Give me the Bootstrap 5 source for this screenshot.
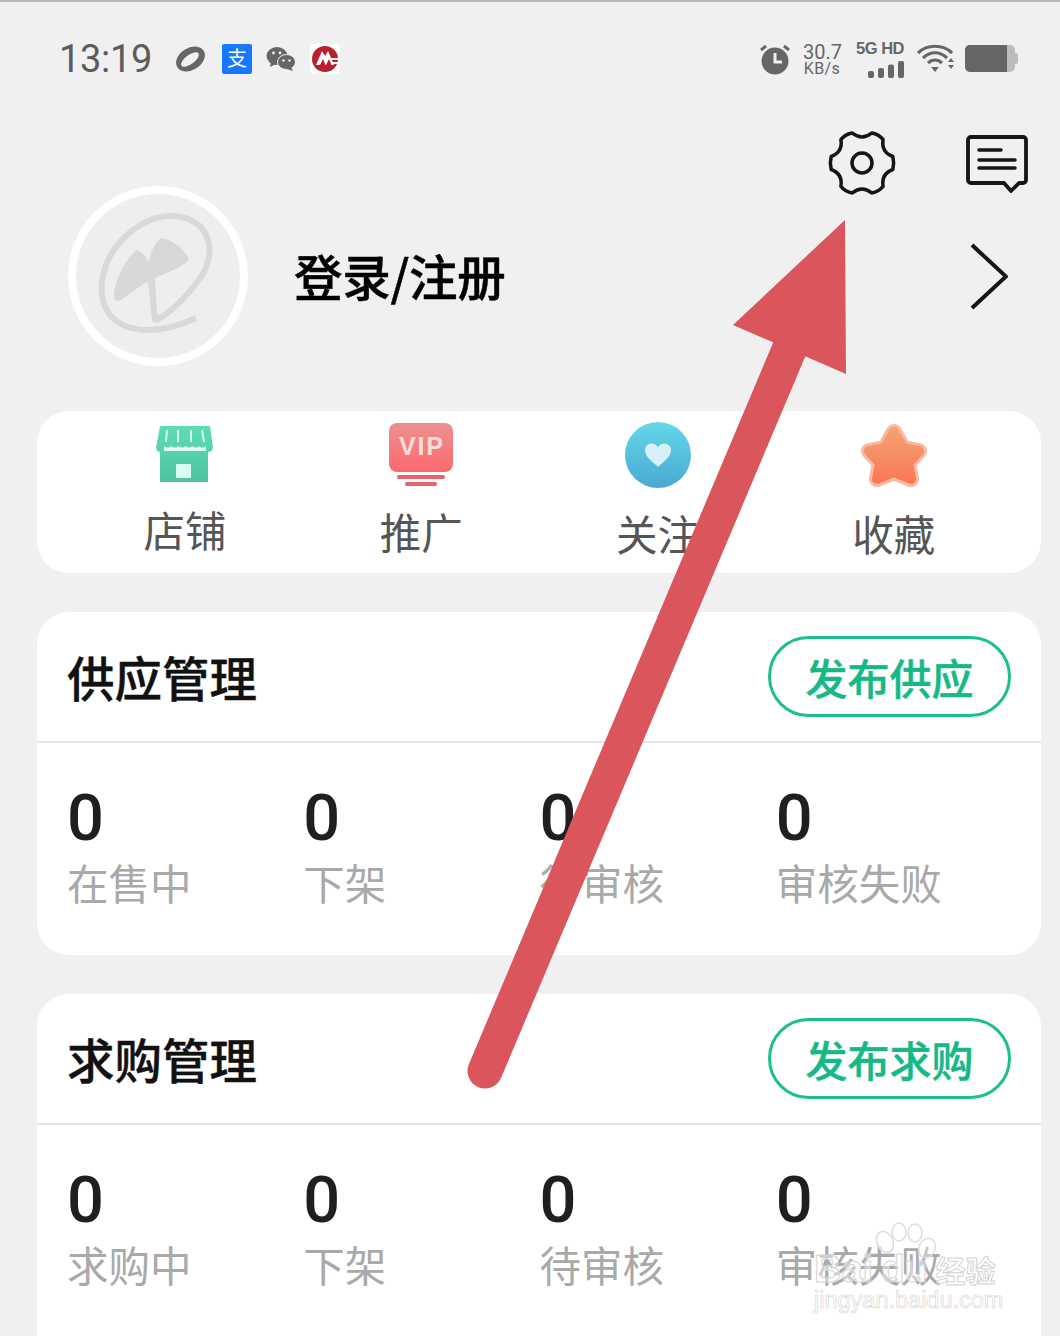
<!DOCTYPE html>
<html lang="zh-CN">
<head>
<meta charset="utf-8">
<title>我的</title>
<link href="https://cdn.jsdelivr.net/npm/bootstrap@5.3.0/dist/css/bootstrap.min.css" rel="stylesheet">
<style>
html,body{margin:0;padding:0;background:#f0f0f0}
.shot{position:relative;width:1060px;height:1336px;overflow:hidden;background:#f0f0f0;border-top:2px solid #b8b8b8;font-family:"Noto Sans CJK SC","Liberation Sans",sans-serif}
.sbar{height:36px;margin-top:39px;padding:0 41px 0 59px}
.clock{font:400 38px/36px Roboto,sans-serif;color:#5c5c5c;margin-right:23px;letter-spacing:-.3px}
.gap-a{margin-right:16px}.gap-b{margin-right:14px}.gap-c{margin-right:6px}.gap-d{margin-right:10px}.gap-e{margin-right:12px}
.speed{font-family:Roboto,sans-serif;color:#666;text-align:center;line-height:1;width:38px;margin-right:13px}
.speed b{display:block;font-weight:400;font-size:20px}
.speed i{display:block;font-style:normal;font-size:16px;margin-top:-1px;letter-spacing:.4px}
.net{width:50px;margin-right:13px;font:700 16.500px/1 "Liberation Sans",sans-serif;color:#666;white-space:nowrap;letter-spacing:-.5px}
.tools{height:60px;margin-top:56px;padding-right:32px;gap:71px}
.who{height:180px;margin-top:-7px;padding:0 52px 0 68px}
.who-name{font-size:48.500px;font-weight:500;color:#000;line-height:1;margin-left:46px;margin-top:-1px;letter-spacing:-.3px;-webkit-text-stroke:.5px #000}
.panel{margin:0 19px 0 37px;border:0;border-radius:32px;background:#fff}
.tiles{height:162px;margin-top:45px;padding:0 29px 0 30px}
.tile{height:162px;padding-top:13px;text-align:center;color:#555;font-size:41.500px;line-height:1}
.tile svg{display:block;margin:0 auto}
.lab1{margin-top:25px}.lab2{margin-top:24px}.lab3{margin-top:25px}.lab4{margin-top:21px}
.mgmt{height:343px;margin-top:39px}
.mgmt2{height:380px}
.mgmt .card-header{height:131px;padding:0 30px 0 30px;background:none;border-bottom:2px solid #e6e6e6;border-radius:32px 32px 0 0}
.mgmt-title{font-size:47.500px;font-weight:500;line-height:1;color:#111;-webkit-text-stroke:.4px #111}
.pub{width:243px;height:81px;border:3px solid #1dbf90;border-radius:41px;padding:0;background:#fff;color:#16b887;font-size:42px;font-weight:500;line-height:1;-webkit-text-stroke:.4px #16b887}
.mgmt .card-body{padding:42px 29px 0 30px}
.num{font:500 65px/66px Roboto,sans-serif;color:#1f1f1f}
.tag{font-size:41.500px;line-height:1;color:#a9a9a9;margin-top:11px;white-space:nowrap}
.over{position:absolute;left:0;top:-2px;pointer-events:none}
.wm{position:absolute;left:814px;top:1248px;width:195px;color:rgba(255,255,255,.45);-webkit-text-stroke:1px #d4d4d4;white-space:nowrap;line-height:1}
.wm1{font:700 38px/38px "Liberation Sans","Noto Sans CJK SC",sans-serif}
.wm1 em{font-style:normal;font-size:30px;margin-left:8px}
.wm2{font:400 23.500px/23px "Liberation Sans",sans-serif;margin-top:-2px;color:#fff;-webkit-text-stroke:.7px #d8d8d8}
</style>
</head>
<body>
<div class="shot">

  <div class="sbar d-flex align-items-center">
    <span class="clock">13:19</span>
    <svg width="31" height="30" viewBox="0 0 31 30" class="gap-a"><ellipse cx="15.500" cy="15" rx="15.500" ry="11" transform="rotate(-32 15.500 15)" fill="#666"/><ellipse cx="15" cy="15.500" rx="10.500" ry="4.500" transform="rotate(-36 15 15.500)" fill="#f0f0f0"/></svg>
    <svg width="30" height="30" viewBox="0 0 30 30" class="gap-b"><rect width="30" height="30" rx="2" fill="#1677ff"/><text x="15" y="22" text-anchor="middle" font-size="20" font-family="Noto Sans CJK SC" fill="#fff">支</text></svg>
    <svg width="30" height="26" viewBox="0 0 30 26" class="gap-c"><ellipse cx="11" cy="10" rx="10.500" ry="9" fill="#666"/><path d="M5 16l-1 5 6-3Z" fill="#666"/><ellipse cx="20.500" cy="16" rx="9" ry="7.500" fill="#666" stroke="#f0f0f0" stroke-width="1"/><path d="M25 21l2 4-6-2Z" fill="#666"/><circle cx="7.500" cy="7" r="1.400" fill="#f0f0f0"/><circle cx="14" cy="7" r="1.400" fill="#f0f0f0"/><circle cx="17.500" cy="14.500" r="1.200" fill="#f0f0f0"/><circle cx="23.500" cy="14.500" r="1.200" fill="#f0f0f0"/></svg>
    <svg width="30" height="30" viewBox="0 0 30 30" class="ms-2"><rect width="30" height="30" rx="4" fill="#fff"/><circle cx="15" cy="15" r="13" fill="#b91f2f"/><path d="M6 21 12 7l3 5 3-5 6 14Z" fill="#fff"/><path d="M10 21l3-6 2.500 6ZM16 21l3-6 2.500 6Z" fill="#b91f2f"/><path d="M21 15h8M23 19h6" stroke="#fff" stroke-width="2"/></svg>
    <span class="ms-auto"></span>
    <svg width="32" height="32" viewBox="0 0 32 32" class="gap-e flex-shrink-0"><circle cx="16" cy="18" r="13.500" fill="#666"/><path d="M16 10v9h7" stroke="#f0f0f0" stroke-width="3" fill="none"/><path d="M2 7l5-4M30 7l-5-4" stroke="#666" stroke-width="3"/></svg>
    <span class="speed"><b>30.7</b><i>KB/s</i></span>
    <span class="net d-flex flex-column align-items-end">
      <span>5G HD</span>
      <svg width="36" height="17" viewBox="0 0 36 17" class="mt-1"><rect x="0" y="10" width="6" height="7" rx="2" fill="#666"/><rect x="10" y="7" width="6" height="10" rx="2" fill="#666"/><rect x="20" y="3.500" width="6" height="13.500" rx="2" fill="#666"/><rect x="30" y="0" width="6" height="17" rx="2" fill="#666"/></svg>
    </span>
    <svg width="38" height="30" viewBox="0 0 38 30" class="flex-shrink-0 gap-d"><path d="M1 9C10 0 26 0 35 9M6 14C13 7 23 7 30 14M11 19c4-4 10-4 14 0" fill="none" stroke="#666" stroke-width="3.200"/><path d="M14 23l4 5 4-5Z" fill="#666"/><path d="M31 18l3-4 3 4ZM31 21l3 4 3-4Z" fill="#666"/></svg>
    <svg width="54" height="28" viewBox="0 0 54 28" class="flex-shrink-0"><rect x="0" y="0" width="50" height="27" rx="5" fill="#bcbcbc"/><rect x="49" y="8" width="4" height="11" rx="2" fill="#bcbcbc"/><path d="M5 0h37v27H5a5 5 0 0 1-5-5V5a5 5 0 0 1 5-5Z" fill="#666"/></svg>
  </div>

  <div class="tools d-flex justify-content-end align-items-start">
    <svg width="66" height="60" viewBox="0 0 66 60" overflow="visible"><path d="M23.300 0Q33 8 42.700 0Q49.500 1 54.100 6.600Q52 19 63.800 23.500Q65.500 30 63.800 36.500Q52 41 54.100 53.400Q49.500 59 42.700 60Q33 52 23.300 60Q16.500 59 11.900 53.400Q14 41 2.200 36.500Q.5 30 2.200 23.500Q14 19 11.900 6.600Q16.500 1 23.300 0Z" fill="none" stroke="#151515" stroke-width="3.500" stroke-linejoin="round"/><circle cx="33" cy="30" r="10" fill="none" stroke="#151515" stroke-width="3.500"/></svg>
    <svg width="62" height="60" viewBox="0 0 62 60"><path d="M5 4h52a3 3 0 0 1 3 3v40a3 3 0 0 1-3 3H53l-8 8-7-8H5a3 3 0 0 1-3-3V7a3 3 0 0 1 3-3Z" fill="none" stroke="#151515" stroke-width="3.800" stroke-linejoin="round"/><path d="M13 17h22M13 27h36M13 35h36" stroke="#151515" stroke-width="3.500" stroke-linecap="round"/></svg>
  </div>

  <div class="who d-flex align-items-center">
    <svg width="180" height="180" viewBox="0 0 180 180" class="flex-shrink-0"><circle cx="90" cy="90" r="86" fill="#eeeeee" stroke="#ffffff" stroke-width="8"/><path d="M128 132C90 150 45 150 35 115C25 70 70 28 105 30C145 32 150 70 130 95C115 115 100 128 87 135" fill="none" stroke="#d9d9d9" stroke-width="6"/><path d="M69 64C74 66 78 70 80 76C84 64 88 54 94 52C105 54 118 64 121 74C112 82 96 88 87 92C88 105 88 120 90 130L85 137C82 125 82 110 80 96C70 100 58 112 50 115C44 115 46 105 48 98C52 85 60 70 69 64Z" fill="#d8d8d8"/></svg>
    <span class="who-name">登录/注册</span>
    <svg width="38" height="67" viewBox="0 0 38 67" class="ms-auto"><path d="M2 2l34 31.500L2 65" fill="none" stroke="#151515" stroke-width="4"/></svg>
  </div>

  <div class="panel tiles card">
    <div class="row g-0">
      <div class="col-3 tile">
        <svg width="60" height="60" viewBox="0 0 60 60"><defs><linearGradient id="g1" x1="0" y1="0" x2="0" y2="1"><stop offset="0" stop-color="#5fdcb4"/><stop offset="1" stop-color="#4cc4a2"/></linearGradient></defs><path d="M5 2h50l3 22c-1 3-3 4-5 4v30H5V28c-2 0-3-1-4-4Z" fill="url(#g1)"/><path d="M12 6l-1 12M23 6v12M36 6v12M47 6l2 12" stroke="#d8f7ec" stroke-width="2"/><path d="M9 22q5 3 7 0 5 3 7 0 5 3 7 0 5 3 7 0 5 3 7 0 3 3 7 0v5H9Z" fill="#e1faf2"/><rect x="21" y="40" width="15" height="14" fill="#d9fbf0"/></svg>
        <div class="lab1">店铺</div>
      </div>
      <div class="col-3 tile">
        <svg width="64" height="64" viewBox="0 0 64 64" style="margin-top:-1px"><defs><linearGradient id="g2" x1="0" y1="0" x2="0" y2="1"><stop offset="0" stop-color="#ec9190"/><stop offset="1" stop-color="#fd686e"/></linearGradient></defs><rect x="0" y="0" width="64" height="49" rx="8" fill="url(#g2)"/><text x="32" y="32" text-anchor="middle" font-size="25" font-weight="700" font-family="Liberation Sans" fill="#fbdcda" textLength="44">VIP</text><rect x="8" y="52" width="48" height="4" rx="2" fill="#e96169"/><rect x="16" y="59" width="32" height="4" rx="2" fill="#e96169"/></svg>
        <div class="lab2">推广</div>
      </div>
      <div class="col-3 tile">
        <svg width="66" height="66" viewBox="0 0 66 66" style="margin-top:-2px"><defs><linearGradient id="g3" x1="0" y1="0" x2="0" y2="1"><stop offset="0" stop-color="#64d8e8"/><stop offset="1" stop-color="#4aa9d3"/></linearGradient></defs><circle cx="33" cy="33" r="33" fill="url(#g3)"/><path d="M33 45C28 40 20 35 20 28c0-7 9-9 13-3 4-6 13-4 13 3 0 7-8 12-13 17Z" fill="#d7f0f5"/></svg>
        <div class="lab3">关注</div>
      </div>
      <div class="col-3 tile">
        <svg width="70" height="70" viewBox="0 0 70 70" style="margin-top:-2px"><defs><linearGradient id="g4" x1="0" y1="0" x2="0" y2="1"><stop offset="0" stop-color="#f2a070"/><stop offset="1" stop-color="#fa7a58"/></linearGradient></defs><path d="M35 10L44 26 60 29 49 41 52 57 35 50 18 57 21 41 10 29 26 26Z" fill="#fbb7a3" stroke="#fbb7a3" stroke-width="16" stroke-linejoin="round"/><path d="M35 10L44 26 60 29 49 41 52 57 35 50 18 57 21 41 10 29 26 26Z" fill="url(#g4)" stroke="url(#g4)" stroke-width="10" stroke-linejoin="round"/></svg>
        <div class="lab4">收藏</div>
      </div>
    </div>
  </div>

  <div class="panel mgmt card">
    <div class="card-header d-flex justify-content-between align-items-center">
      <span class="mgmt-title">供应管理</span>
      <button type="button" class="btn pub">发布供应</button>
    </div>
    <div class="card-body">
      <div class="row g-0">
        <div class="col-3"><div class="num">0</div><div class="tag">在售中</div></div>
        <div class="col-3"><div class="num">0</div><div class="tag">下架</div></div>
        <div class="col-3"><div class="num">0</div><div class="tag">待审核</div></div>
        <div class="col-3"><div class="num">0</div><div class="tag">审核失败</div></div>
      </div>
    </div>
  </div>

  <div class="panel mgmt mgmt2 card">
    <div class="card-header d-flex justify-content-between align-items-center">
      <span class="mgmt-title">求购管理</span>
      <button type="button" class="btn pub">发布求购</button>
    </div>
    <div class="card-body">
      <div class="row g-0">
        <div class="col-3"><div class="num">0</div><div class="tag">求购中</div></div>
        <div class="col-3"><div class="num">0</div><div class="tag">下架</div></div>
        <div class="col-3"><div class="num">0</div><div class="tag">待审核</div></div>
        <div class="col-3"><div class="num">0</div><div class="tag">审核失败</div></div>
      </div>
    </div>
  </div>

  <svg class="over" width="1060" height="1336" viewBox="0 0 1060 1336">
    <path d="M485 1071L789 350" stroke="#da565c" stroke-width="35" stroke-linecap="round"/>
    <path d="M845 220L733 325 846 374Z" fill="#da565c"/>
    <g fill="rgba(255,255,255,.35)" stroke="#dcdcdc" stroke-width="1.500">
      <ellipse cx="885" cy="1242" rx="8" ry="11" transform="rotate(-25 885 1242)"/>
      <ellipse cx="899" cy="1232" rx="7" ry="9"/>
      <ellipse cx="915" cy="1233" rx="7" ry="9"/>
      <ellipse cx="927" cy="1248" rx="8" ry="10" transform="rotate(25 927 1248)"/>
    </g>
  </svg>
  <div class="wm">
    <div class="wm1">Bai<span class="ms-2">du</span><em>经验</em></div>
    <div class="wm2">jingyan.baidu.com</div>
  </div>

</div>
<script src="https://cdn.jsdelivr.net/npm/bootstrap@5.3.0/dist/js/bootstrap.bundle.min.js"></script>
</body>
</html>
